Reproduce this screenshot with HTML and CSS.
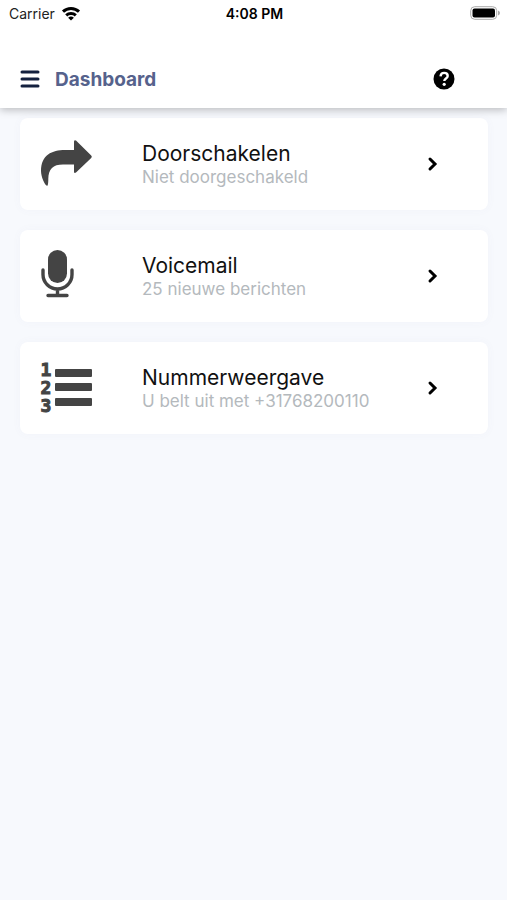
FILE: index.html
```html
<!DOCTYPE html>
<html lang="nl">

<head>
    <meta charset="UTF-8">
    <meta name="viewport" content="width=device-width, initial-scale=1.0">
    <title>Dashboard</title>

    <link rel="stylesheet" href="styles.css">
</head>

<body>

    <header>
        <div class="statusBar">
            <div class="carrier">
                <span>Carrier</span>
                <svg width="20" height="15" viewBox="0 0 20 15" fill="none" stroke="#000" stroke-width="3">
                    <path d="M2 5.700a11.500 11.500 0 0 1 16 0" />
                    <path d="M5.200 9.400a7 7 0 0 1 9.600 0" />
                    <path d="M10 14.500L7.100 11.800a4.200 4.200 0 0 1 5.800 0z" fill="#000" stroke="none" />
                </svg>
            </div>
            <div class="time">4:08 PM</div>
            <div class="battery">
                <svg width="30" height="14" viewBox="0 0 30 14">
                    <rect x="0.700" y="0.700" width="26" height="12.600" rx="4" fill="#fff" stroke="#aaa" />
                    <rect x="2.500" y="2.500" width="22.500" height="9" rx="2" />
                    <path d="M28 4.500q2 .8 2 2.500t-2 2.500z" fill="#aaa" />
                </svg>
            </div>
        </div>

        <div class="navBar">
            <button type="button" class="menuButton" aria-label="Menu">
                <svg width="20" height="18" viewBox="0 0 20 18" fill="none" stroke="#14213f" stroke-width="3" stroke-linecap="round">
                    <path d="M2 2h16M2 9h16M2 16h16" />
                </svg>
            </button>
            <h1>Dashboard</h1>
            <button type="button" class="helpButton" aria-label="Help">
                <svg width="22" height="22" viewBox="0 0 22 22">
                    <circle cx="11" cy="11" r="10.500" />
                    <path d="M7.500 8.300c.3-2.200 1.700-3.400 3.600-3.400 2.200 0 3.600 1.200 3.600 3 0 2.600-3.400 2.700-3.400 5.200" fill="none" stroke="#fff" stroke-width="2.400" />
                    <circle cx="11.200" cy="16.300" r="1.600" fill="#fff" />
                </svg>
            </button>
        </div>
    </header>

    <main>
        <a class="card" href="#doorschakelen">
            <div class="cardIcon">
                <svg width="52" height="52" viewBox="0 0 52 52" fill="#444">
                    <path d="M33 3.800q0-2.500 2-1.200l15.200 15q1.300 1.200 0 2.400L35 34.600q-2 1.200-2-1.200V26.500H22C12 26.500 7.500 31 7.300 41c0 3-.2 7-1.300 6.800C4 47.500 0 39 0 33 0 17 11 12 24 12h9z" />
                </svg>
            </div>
            <div class="cardText">
                <h2>Doorschakelen</h2>
                <p>Niet doorgeschakeld</p>
            </div>
            <svg class="chevron" width="10" height="14" viewBox="0 0 10 14">
                <path d="M2 2l5 5-5 5" />
            </svg>
        </a>

        <a class="card" href="#voicemail">
            <div class="cardIcon">
                <svg width="52" height="52" viewBox="0 0 52 52" fill="#444">
                    <rect x="7" y="0" width="19" height="33" rx="9.500" />
                    <path d="M2 20v4.500a14.500 14.500 0 0 0 29 0V20M16.500 39v6M7 45.500h19" fill="none" stroke="#444" stroke-width="3.400" stroke-linecap="round" />
                </svg>
            </div>
            <div class="cardText">
                <h2>Voicemail</h2>
                <p>25 nieuwe berichten</p>
            </div>
            <svg class="chevron" width="10" height="14" viewBox="0 0 10 14">
                <path d="M2 2l5 5-5 5" />
            </svg>
        </a>

        <a class="card" href="#nummerweergave">
            <div class="cardIcon">
                <svg width="52" height="52" viewBox="0 0 52 52" fill="#444">
                    <g class="digits">
                        <text x="5" y="14" text-anchor="middle">1</text>
                        <text x="5" y="32" text-anchor="middle">2</text>
                        <text x="5" y="50" text-anchor="middle">3</text>
                    </g>
                    <rect x="14" y="7" width="37" height="8" rx="1" />
                    <rect x="14" y="21" width="37" height="8" rx="1" />
                    <rect x="14" y="36" width="37" height="8" rx="1" />
                </svg>
            </div>
            <div class="cardText">
                <h2>Nummerweergave</h2>
                <p>U belt uit met +31768200110</p>
            </div>
            <svg class="chevron" width="10" height="14" viewBox="0 0 10 14">
                <path d="M2 2l5 5-5 5" />
            </svg>
        </a>
    </main>

</body>

</html>
```
FILE: styles.css
```css
body {
    margin: 0;
    padding: 0;
    font-family: Inter, 'Liberation Sans', sans-serif;
    background-color: #f7f9fd;
}

svg {
    display: block;
    overflow: visible;
}

header {
    position: relative;
    background-color: #fff;
    box-shadow: 0px 2px 8px rgba(0, 0, 0, 0.25);
}

.statusBar {
    display: flex;
    align-items: center;
    height: 26px;
    padding: 0px 7px 0px 9px;
    font-size: 14px;
}

.carrier,
.battery {
    display: flex;
    flex: 1;
    align-items: center;
    gap: 6px;
}

.carrier {
    color: #222;
}

.battery {
    justify-content: flex-end;
}

.time {
    font-weight: 600;
}

.navBar {
    display: flex;
    align-items: center;
    height: 58px;
    padding: 24px 52px 0px 20px;
}

.navBar h1 {
    flex: 1;
    margin: 0px 0px 0px 15px;
    font-size: 19px;
    font-weight: 700;
    color: #56628c;
}

.navBar button {
    padding: 0px;
    border: none;
    background: none;
    cursor: pointer;
}

main {
    display: flex;
    flex-direction: column;
    gap: 20px;
    padding: 10px 19px 20px 20px;
}

.card {
    display: flex;
    align-items: center;
    padding: 20px 50px 20px 21px;
    border-radius: 8px;
    background-color: #fff;
    box-shadow: 0px 0px 10px rgba(90, 110, 150, 0.04);
    color: #111;
    text-decoration: none;
}

.cardIcon {
    width: 101px;
}

.cardText {
    flex: 1;
    padding-top: 2px;
}

.cardText h2 {
    margin: 0px;
    font-size: 21px;
    line-height: 24px;
    font-weight: 400;
}

.cardText p {
    margin: 0px;
    font-size: 17px;
    line-height: 22px;
    color: #b4b9bd;
}

.digits {
    font-family: 'DejaVu Sans Mono', monospace;
    font-size: 18px;
    font-weight: 700;
    stroke: #444;
    stroke-width: 1px;
}

.chevron {
    fill: none;
    stroke: #000;
    stroke-width: 3;
    stroke-linecap: round;
}
```
